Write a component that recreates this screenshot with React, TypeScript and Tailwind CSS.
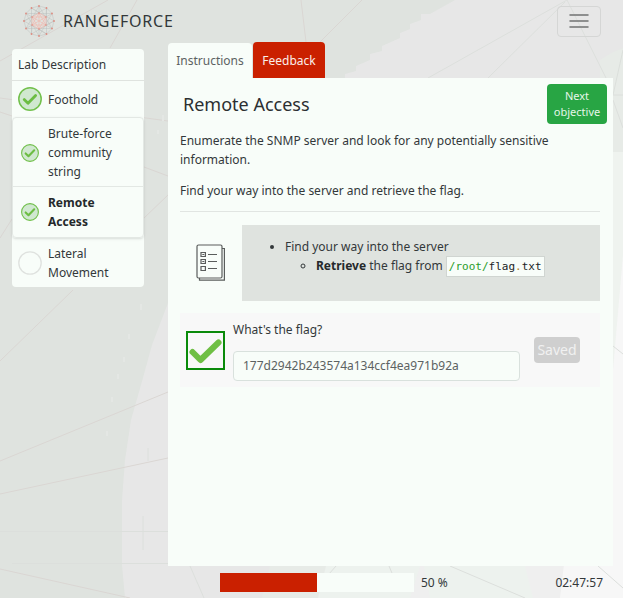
import { useState } from "react";

type StepState = "done" | "open";

function Backdrop() {
  return (
    <svg
      aria-hidden="true"
      className="absolute inset-0 -z-10 h-full w-full"
      viewBox="0 0 623 598"
      preserveAspectRatio="none"
    >
      <rect width="623" height="598" fill="#f7f7f7" />
      <path d="M0 0H623V152H613L560 598H0Z" fill="#efefef" />
      <path d="M613 152H623V255L613 370Z" fill="#eff3ef" />
      <path d="M326 566H420L410 598H318ZM424 566H525L533 598H430Z" fill="#edf2ee" />
      <path d="M0 0H623V152H613V60L300 570V598H0Z" fill="#e7e7e7" />
      <path d="M613 52L623 48V152H600V60Z" fill="#e7ebe7" />
      <path d="M270 566H326L318 598H262Z" fill="#e7ebe7" />
      <path d="M0 0H455L430 14L421 14V20L410 24V29L400 33V38L382 46V51L370 54V60L356 66V71L345 74V78H168V303L152 345L141 385L131 420L125 460L122 500V565L125 598H0Z" fill="#dfe3df" />
      <g fill="none" stroke="#dad6d3" strokeWidth="1">
        <path d="M0 61L108 0M137 0L110 48M0 98L168 121M144 167L168 176M168 195L144 218M12 219L0 238M73 290L0 361M0 461L168 392M0 494L168 458M0 569L130 598M0 112L12 116M301 0L306 42M362 0L320 42" />
      </g>
      <g fill="none" stroke="#dcdfdc" strokeWidth="1">
        <path d="M567 0L428 78M565 2L488 78M567 0L606 78M623 50L613 95M613 95H623M613 100L623 128M0 531.5H168M12 563.5H168M143 516V550M148 448V461M190 566L204 598M336 566L322 582M389 566L400 592M450 566L525 598M598 566L623 588M613 346L623 354" />
      </g>
      <g fill="#e4e7e4">
        <path d="M140 304h2v6h-2zM128 334h2v5h-2zM123 357h2v5h-2zM117 374h2v5h-2zM111 397h2v5h-2zM106 431h2v5h-2zM162 115h2v6h-2zM157 130h2v4h-2z" />
      </g>
    </svg>
  );
}

function Logo() {
  const outer = Array.from({ length: 12 }, (_, i) => {
    const a = (i * Math.PI) / 6;
    return [16 + 15 * Math.cos(a), 16 + 15 * Math.sin(a)];
  });
  const inner = Array.from({ length: 6 }, (_, i) => {
    const a = (i * Math.PI) / 3 + Math.PI / 6;
    return [16 + 8 * Math.cos(a), 16 + 8 * Math.sin(a)];
  });
  return (
    <svg aria-hidden="true" viewBox="0 0 32 32" className="size-8">
      <g stroke="#a3a9a9" strokeWidth="0.4" opacity="0.7">
        {outer.map(([x, y], i) => {
          const next = outer[(i + 1) % 12];
          const skip = outer[(i + 4) % 12];
          const hub = inner[Math.floor(i / 2)];
          return (
            <g key={i}>
              <line x1={x} y1={y} x2={next[0]} y2={next[1]} />
              <line x1={x} y1={y} x2={skip[0]} y2={skip[1]} />
              <line x1={x} y1={y} x2={hub[0]} y2={hub[1]} />
            </g>
          );
        })}
      </g>
      <g stroke="#f0b9b0" strokeWidth="0.7">
        {inner.map(([x, y], i) => {
          const next = inner[(i + 1) % 6];
          const skip = inner[(i + 2) % 6];
          return (
            <g key={i}>
              <line x1={x} y1={y} x2={next[0]} y2={next[1]} />
              <line x1={x} y1={y} x2={skip[0]} y2={skip[1]} />
              <line x1={x} y1={y} x2="16" y2="16" />
            </g>
          );
        })}
      </g>
      <g fill="#e08c80">
        {outer.map(([x, y], i) => (
          <circle key={i} cx={x} cy={y} r="0.9" />
        ))}
        {inner.map(([x, y], i) => (
          <circle key={i} cx={x} cy={y} r="0.8" />
        ))}
      </g>
    </svg>
  );
}

function StepIcon({ state, small }: { state: StepState; small?: boolean }) {
  return (
    <svg aria-hidden="true" viewBox="0 0 24 24" fill="none" className={small ? "mx-[3px] size-[18px] shrink-0" : "size-6 shrink-0"}>
      {state === "done" ? (
        <>
          <circle cx="12" cy="12" r="11.2" fill="#d0e8d0" stroke="#72c04c" strokeWidth="1.5" />
          <path d="M6.2 12.6L10 16.2L17.6 8.4" stroke="#6cbd43" strokeWidth="2.8" strokeLinecap="round" strokeLinejoin="round" />
        </>
      ) : (
        <circle cx="12" cy="12" r="11.2" stroke="#dfe2df" strokeWidth="1.3" />
      )}
    </svg>
  );
}

function ChecklistIcon() {
  return (
    <svg aria-hidden="true" viewBox="0 0 30 38" fill="none" stroke="#5a5d5c" strokeWidth="1.2" className="h-[38px] w-[30px]">
      <path d="M3.5 34V36.2H28.4V4.5H26" />
      <rect x="1" y="1" width="25" height="33" rx="1.5" />
      <path d="M5 8.5h4.4v4H5zM5 15.5h4.4v4H5zM5 22.5h4.4v4H5z" />
      <path d="M6.3 10.5h2M6.3 17.5h2M12 10.5h9M12 17.5h9M12 24.5h9" />
    </svg>
  );
}

function Sidebar() {
  return (
    <nav aria-label="Lab steps" className="mt-[7px] w-[132px] shrink-0 self-start rounded-sm bg-[#f8fdf9]">
      <a href="#lab" className="block border-b border-[#dfe3df] px-1.5 py-1.5">Lab Description</a>
      <a href="#foothold" className="flex items-center gap-1.5 py-1.5 pr-4 pl-1.5">
        <StepIcon state="done" />
        Foothold
      </a>
      <div className="rounded-sm border border-[#e3e8e4] shadow-sm">
        <a href="#brute" className="flex items-center gap-1.5 border-b border-[#e3e8e4] pt-1.5 pr-4 pb-[5px] pl-[5px]">
          <StepIcon state="done" small />
          Brute-force community string
        </a>
        <a href="#remote" aria-current="step" className="flex items-center gap-1.5 py-1.5 pr-4 pl-[5px] font-bold text-[#25292b]">
          <StepIcon state="done" small />
          Remote Access
        </a>
      </div>
      <a href="#lateral" className="flex items-center gap-1.5 pt-1.5 pr-4 pb-[5px] pl-1.5">
        <StepIcon state="open" />
        Lateral Movement
      </a>
    </nav>
  );
}

export default function App() {
  const [flag, setFlag] = useState("177d2942b243574a134ccf4ea971b92a");
  const progress = 50;
  return (
    <div className="relative isolate flex min-h-screen flex-col font-['Noto_Sans',sans-serif] text-xs leading-[19px] text-[#33383a]">
      <Backdrop />
      <header className="flex h-[42px] items-center justify-between pr-[22px] pl-[23px]">
        <a href="#home" className="flex items-center gap-2 text-base tracking-wider">
          <Logo />
          RANGEFORCE
        </a>
        <button type="button" aria-label="Menu" className="flex h-[31px] w-11 items-center justify-center rounded border border-[#d5d6d5]">
          <svg aria-hidden="true" viewBox="0 0 20 16" className="h-4 w-5" stroke="#727373" strokeWidth="1.5" strokeLinecap="round">
            <path d="M1 2H19M1 8H19M1 14H19" />
          </svg>
        </button>
      </header>

      <div className="flex flex-1 gap-6 pr-2.5 pl-3">
        <Sidebar />
        <main className="flex min-w-0 flex-1 flex-col">
          <div className="flex items-end gap-px">
            <button type="button" className="h-[35px] w-[84px] rounded-t bg-[#f8fdf9] text-[#5c6262]">Instructions</button>
            <button type="button" className="h-9 w-[72px] rounded-t bg-[#ca2000] text-[#fbeeea]">Feedback</button>
          </div>
          <section className="flex-1 bg-[#f8fdf9] pt-1.5 pr-1.5 pl-3">
            <div className="flex items-center justify-between pl-[3px]">
              <h1 className="text-lg text-[#2b2f31]">Remote Access</h1>
              <button type="button" className="h-10 w-[60px] rounded-sm bg-[#28a544] text-[11px] leading-4 text-[#e6f6e9]">
                Next objective
              </button>
            </div>
            <div className="pr-[7px]">
              <p className="mt-[7px]">
                Enumerate the SNMP server and look for any potentially sensitive information.
              </p>
              <p className="mt-3">Find your way into the server and retrieve the flag.</p>
              <hr className="mt-[11px] border-[#e1e5e2]" />
              <div className="mt-[13px] flex">
                <div className="flex w-[62px] shrink-0 items-center justify-center">
                  <ChecklistIcon />
                </div>
                <div className="h-[76px] flex-1 bg-[#dfe3df] pt-3 pl-[43px]">
                  <ul className="list-disc">
                    <li>
                      Find your way into the server
                      <ul className="list-[circle] pl-[31px]">
                        <li>
                          <strong className="text-[#25292b]">Retrieve</strong> the flag from{" "}
                          <code className="border border-[#d0d5d1] bg-[#f8fdf9] px-0.5 py-[3px] font-['DejaVu_Sans_Mono',monospace] text-[11px] text-[#202426]">
                            <span className="text-[#299c29]">/root/</span>flag<span className="text-[#b58428]">.</span>txt
                          </code>
                        </li>
                      </ul>
                    </li>
                  </ul>
                </div>
              </div>
              <form className="mt-3 flex h-[74px] items-center bg-[#f8f8f8] pr-5 pl-1.5" onSubmit={(e) => e.preventDefault()}>
                <div className="size-[39px] shrink-0 border-2 border-[#0a8a0a]">
                  <svg aria-hidden="true" viewBox="0 0 35 35" fill="none" className="size-full">
                    <path d="M4.5 19L12.5 27L30.5 9.5" stroke="#6fbf44" strokeWidth="6" strokeLinecap="round" strokeLinejoin="round" />
                  </svg>
                </div>
                <div className="ml-2 flex-1">
                  <label htmlFor="flag">What&apos;s the flag?</label>
                  <input
                    id="flag"
                    value={flag}
                    onChange={(e) => setFlag(e.target.value)}
                    className="mt-3 block h-[30px] w-full rounded-sm border border-[#d9e1dd] bg-[#f8fdf9] px-[9px] text-[#5c6262]"
                  />
                </div>
                <button type="submit" className="ml-3.5 h-[26px] w-[46px] rounded-sm bg-[#cfcfcf] text-sm text-[#f1f1f1]">Saved</button>
              </form>
            </div>
          </section>
        </main>
      </div>

      <footer className="flex h-8 items-center pr-5 pl-[220px]">
        <div className="h-[19px] w-[194px] bg-[#f8fdf9]" role="progressbar" aria-label="Lab progress" aria-valuenow={progress} aria-valuemin={0} aria-valuemax={100}>
          <div className="h-full bg-[#ca2000]" style={{ width: `${progress}%` }} />
        </div>
        <span className="ml-[7px]">{progress} %</span>
        <time className="ml-auto">02:47:57</time>
      </footer>
    </div>
  );
}
